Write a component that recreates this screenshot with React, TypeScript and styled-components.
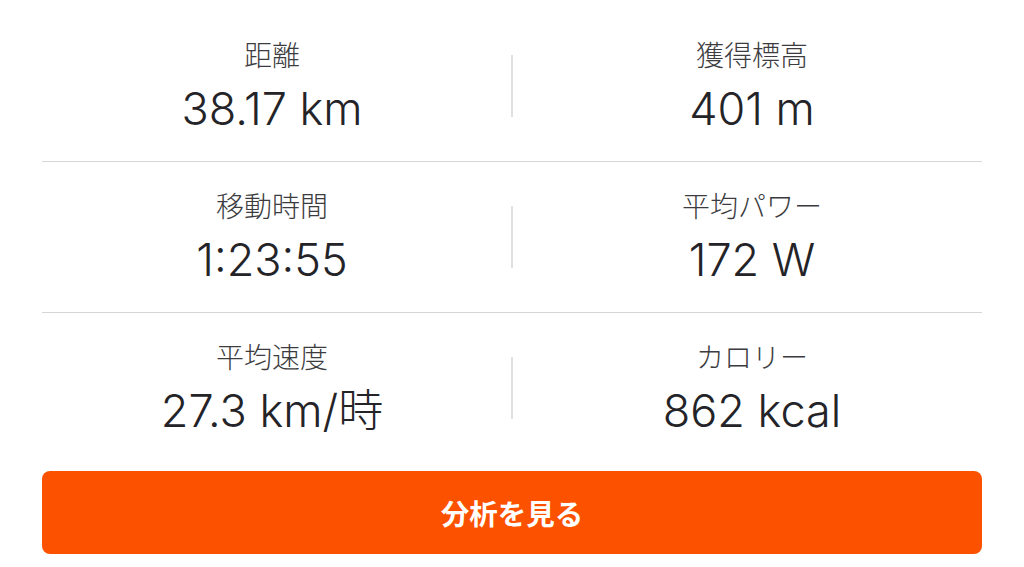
import React from "react";
import styled, { createGlobalStyle } from "styled-components";

const GlobalStyle = createGlobalStyle`
  html, body {
    margin: 0;
    padding: 0;
    background: #ffffff;
  }
  body {
    font-family: "Inter", "Noto Sans CJK JP", sans-serif;
  }
`;

type Stat = { label: string; value: string };

const rows: [Stat, Stat][] = [
  [
    { label: "距離", value: "38.17 km" },
    { label: "獲得標高", value: "401 m" },
  ],
  [
    { label: "移動時間", value: "1:23:55" },
    { label: "平均パワー", value: "172 W" },
  ],
  [
    { label: "平均速度", value: "27.3 km/時" },
    { label: "カロリー", value: "862 kcal" },
  ],
];

export default function App() {
  return (
    <>
      <GlobalStyle />
      <Page>
        <StatsTable>
          {rows.map((row, i) => (
            <StatRow key={i} last={i === rows.length - 1}>
              <StatCell>
                <Label>{row[0].label}</Label>
                <Value>{row[0].value}</Value>
              </StatCell>
              <Separator />
              <StatCell>
                <Label>{row[1].label}</Label>
                <Value>{row[1].value}</Value>
              </StatCell>
            </StatRow>
          ))}
        </StatsTable>
        <AnalyzeButton>分析を見る</AnalyzeButton>
      </Page>
    </>
  );
}

const Page = styled.div`
  width: 1024px;
  height: 567px;
  box-sizing: border-box;
  padding: 11px 42px 0;
  overflow: hidden;
`;

const StatsTable = styled.div`
  display: flex;
  flex-direction: column;
`;

const StatRow = styled.div<{ last?: boolean }>`
  display: grid;
  grid-template-columns: 1fr 20px 1fr;
  align-items: center;
  height: 150px;
  border-bottom: ${p => (p.last ? "none" : "1px solid #d6d6d6")};
`;

const StatCell = styled.div`
  display: flex;
  flex-direction: column;
  align-items: center;
  gap: 13px;
`;

const Label = styled.div`
  font-family: "Noto Sans CJK JP", sans-serif;
  font-weight: 300;
  font-size: 28px;
  line-height: 32px;
  color: #3c3c40;
`;

const Value = styled.div`
  font-family: "Inter", "Noto Sans CJK JP", sans-serif;
  font-weight: 300;
  font-size: 45px;
  line-height: 52px;
  color: #242428;
`;

const Separator = styled.div`
  justify-self: center;
  width: 2px;
  height: 62px;
  background: #e0e0e0;
`;

const AnalyzeButton = styled.button`
  display: flex;
  align-items: center;
  justify-content: center;
  width: 100%;
  height: 83px;
  margin-top: 8px;
  border: none;
  border-radius: 8px;
  background: #fc5200;
  color: #ffffff;
  font-family: "Noto Sans CJK JP", sans-serif;
  font-weight: 700;
  font-size: 28.5px;
  cursor: pointer;
`;
